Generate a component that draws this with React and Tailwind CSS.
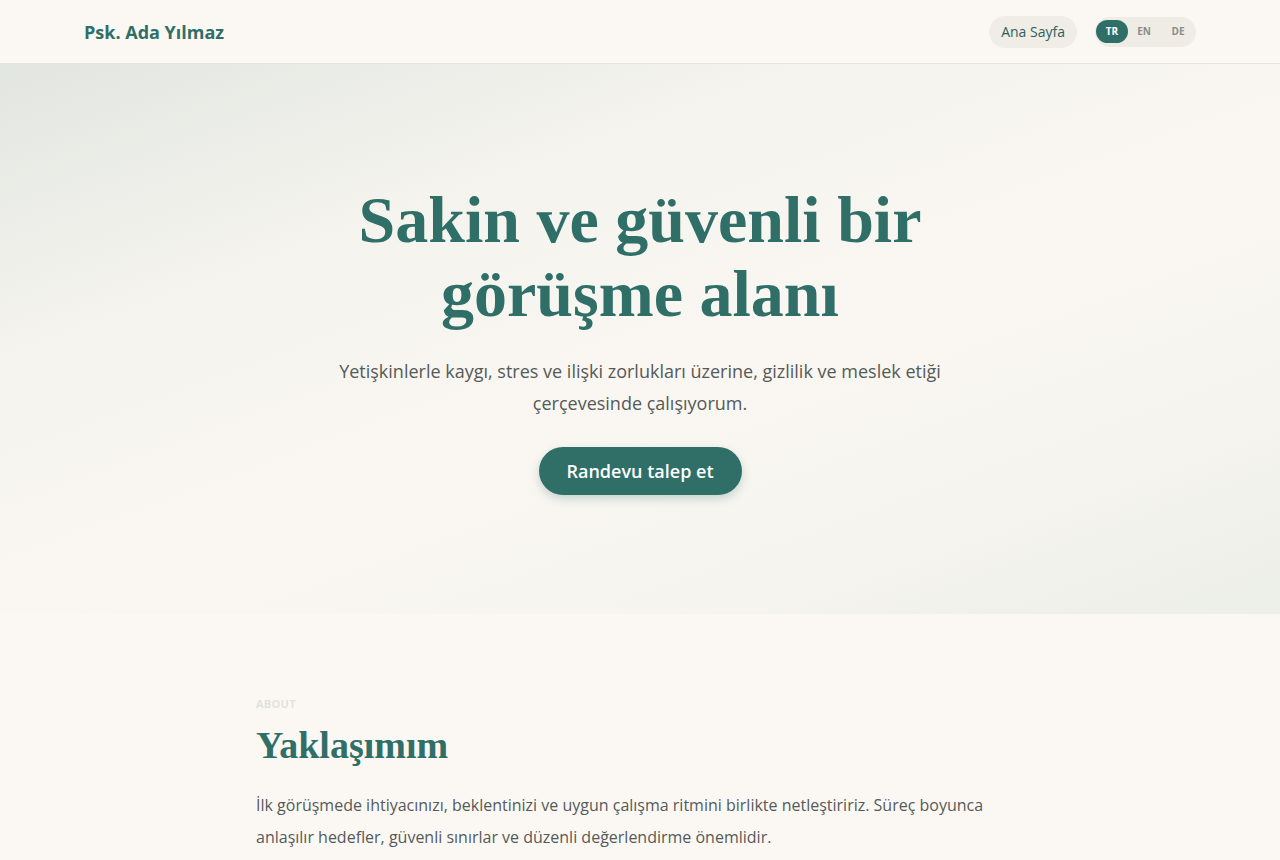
export default function App() {
    return (
        <div className="min-h-screen bg-[#fbf8f4] text-[#4a4f4d]" style={{ fontFamily: '"Open Sans", "Noto Sans", sans-serif' }}>
            {/* Header */}
            <header className="h-16 border-b border-[#e6e3dd] bg-[#fbf8f4]">
                <div className="h-full px-[84px] flex items-center justify-between">
                    <div className="text-lg font-bold text-[#2f6f68]">Psk. Ada Yılmaz</div>
                    <div className="flex items-center gap-[18px]">
                        <a className="h-8 px-3 rounded-full bg-[#f0ece6] flex items-center text-sm text-[#2f5f5a]">Ana Sayfa</a>
                        <div className="h-[30px] pl-px rounded-full bg-[#efebe5] flex items-center text-[10px] font-bold">
                            <span className="w-8 h-[23px] rounded-full bg-[#2f6f68] text-white flex items-center justify-center">TR</span>
                            <span className="w-[32px] h-[23px] flex items-center justify-center text-[#8a8d88]">EN</span>
                            <span className="w-[36px] h-[23px] flex items-center justify-center text-[#8a8d88]">DE</span>
                        </div>
                    </div>
                </div>
            </header>

            {/* Hero */}
            <section className="h-[550px] flex items-center justify-center bg-[linear-gradient(160deg,#e2e6e0_0%,#f4f3ee_28%,#faf7f2_55%,#f5f4ef_80%,#eceee8_100%)]">
                <div className="flex flex-col items-center text-center">
                    <h1 className="text-[66px] leading-[74px] font-bold text-[#2f6f68] max-w-[640px]" style={{ fontFamily: '"Liberation Serif", "DejaVu Serif", serif' }}>
                        Sakin ve güvenli bir görüşme alanı
                    </h1>
                    <p className="mt-6 text-lg leading-8 text-[#555a58] max-w-[620px]">
                        Yetişkinlerle kaygı, stres ve ilişki zorlukları üzerine, gizlilik ve meslek etiği çerçevesinde çalışıyorum.
                    </p>
                    <button className="mt-7 h-12 px-7 rounded-full bg-[#2f6f68] text-white text-lg font-semibold shadow-[0_4px_10px_rgba(47,111,104,0.25)]">
                        Randevu talep et
                    </button>
                </div>
            </section>

            {/* About */}
            <section className="max-w-3xl mx-auto pt-[82px] pb-16">
                <div className="text-[11px] font-bold tracking-wide text-[#dfe4dd]">ABOUT</div>
                <h2 className="mt-[8px] text-[38px] leading-[48px] font-bold text-[#2f6f68]" style={{ fontFamily: '"Liberation Serif", "DejaVu Serif", serif' }}>
                    Yaklaşımım
                </h2>
                <p className="mt-5 text-base leading-8 text-[#555a58]">
                    İlk görüşmede ihtiyacınızı, beklentinizi ve uygun çalışma ritmini birlikte netleştiririz. Süreç boyunca anlaşılır hedefler, güvenli sınırlar ve düzenli değerlendirme önemlidir.
                </p>
            </section>
        </div>
    );
}
